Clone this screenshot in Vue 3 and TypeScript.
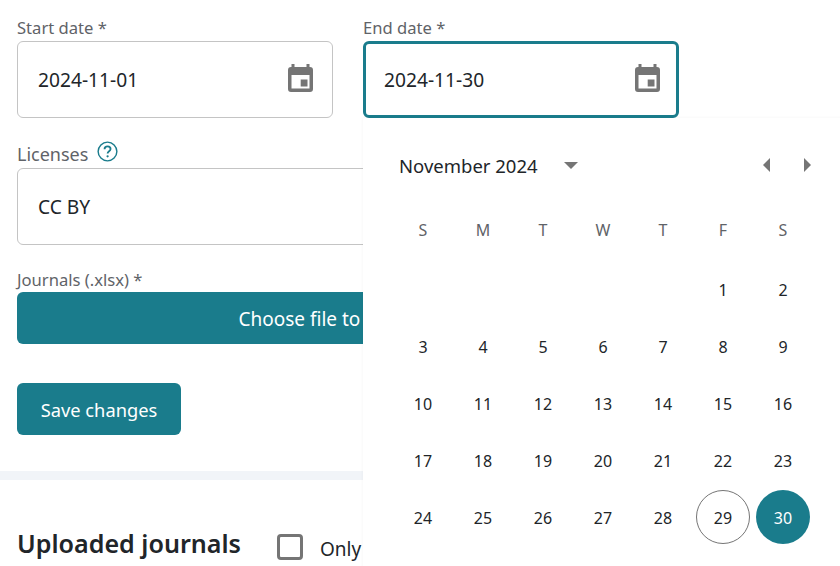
<script setup lang="ts">
const weekdays = ['S', 'M', 'T', 'W', 'T', 'F', 'S']
const days: (number | null)[] = [null, null, null, null, null]
for (let d = 1; d <= 30; d++) days.push(d)
</script>

<template>
  <main class="page">
    <section class="form">
      <div class="row two">
        <div class="field">
          <label class="lbl">Start date *</label>
          <div class="input">
            <span>2024-11-01</span>
            <svg class="cal" viewBox="0 0 25 28" width="25" height="28"><path fill="#757575" fill-rule="evenodd" d="M3.5 0h3v3h12V0h3v3h.5a3 3 0 0 1 3 3v19a3 3 0 0 1-3 3H3a3 3 0 0 1-3-3V6a3 3 0 0 1 3-3h.5zM3.5 11v13.5h18V11zM12.7 15.5h6.8v7h-6.8z" /></svg>
          </div>
        </div>
        <div class="field end">
          <label class="lbl">End date *</label>
          <div class="input focus">
            <span>2024-11-30</span>
            <svg class="cal" viewBox="0 0 25 28" width="25" height="28"><path fill="#757575" fill-rule="evenodd" d="M3.5 0h3v3h12V0h3v3h.5a3 3 0 0 1 3 3v19a3 3 0 0 1-3 3H3a3 3 0 0 1-3-3V6a3 3 0 0 1 3-3h.5zM3.5 11v13.5h18V11zM12.7 15.5h6.8v7h-6.8z" /></svg>
          </div>

          <div class="popup">
            <div class="cal-head">
              <span class="month">November 2024</span>
              <span class="tri down"></span>
              <span class="nav">
                <span class="tri left"></span>
                <span class="tri right"></span>
              </span>
            </div>
            <div class="grid names">
              <span v-for="(w, i) in weekdays" :key="i" class="name">{{ w }}</span>
            </div>
            <div class="grid dates">
              <span
                v-for="(d, i) in days"
                :key="i"
                class="day"
                :class="{ today: d === 29, sel: d === 30 }"
              >{{ d }}</span>
            </div>
          </div>
        </div>
      </div>

      <div class="field lic">
        <label class="lbl">Licenses
          <svg class="help" viewBox="0 0 22 22" width="21" height="21"><circle cx="11" cy="11" r="9.8" fill="none" stroke="#1a7c8c" stroke-width="1.5" /><path d="M7.9 8.6c0-1.8 1.4-3 3.2-3s3.1 1.1 3.1 2.8c0 2.4-3.1 2.4-3.1 4.8" fill="none" stroke="#1a7c8c" stroke-width="1.9" /><circle cx="11.1" cy="16" r="1.2" fill="#1a7c8c" /></svg>
        </label>
        <div class="input"><span>CC BY</span></div>
      </div>

      <div class="field jour">
        <label class="lbl">Journals (.xlsx) *</label>
        <button class="file">Choose file to upload</button>
      </div>

      <button class="save">Save changes</button>
    </section>

    <div class="divider"></div>

    <section class="uploaded">
      <h2>Uploaded journals</h2>
      <span class="check"></span>
      <span class="only">Only show mine</span>
    </section>
  </main>
</template>

<style>
html, body { margin: 0; background: #fff; overflow: hidden; }
</style>

<style scoped>
.page {
  width: 840px;
  height: 566px;
  overflow: hidden;
  font-family: "Noto Sans", "Open Sans", sans-serif;
  color: #212529;
}
.form { padding: 15px 161px 36px 17px; }
.row.two { display: grid; grid-template-columns: 316px 316px; column-gap: 30px; }
.field { position: relative; }
.lbl {
  display: flex;
  align-items: center;
  gap: 9px;
  box-sizing: border-box;
  height: 26px;
  padding-bottom: 2px;
  font-size: 16.6px;
  color: #5f6368;
}
.input {
  box-sizing: border-box;
  height: 77px;
  border: 1px solid #c4c4c4;
  border-radius: 6px;
  background: #fff;
  padding: 0 19px 0 20px;
  display: flex;
  align-items: center;
  justify-content: space-between;
  font-size: 19.2px;
  color: #212529;
}
.input.focus { border: 3px solid #1a7c8c; padding-left: 18px; padding-right: 16px; }
.cal { display: block; margin-top: -3px; }
.lic { margin-top: 24px; width: 662px; }
.lic .lbl { font-size: 18px; }
.help { margin-top: -6px; }
.jour { margin-top: 22px; width: 662px; }
.jour .lbl { height: 25px; padding-bottom: 0; }
.file {
  display: block;
  width: 100%;
  height: 52px;
  border: 0;
  border-radius: 6px;
  padding: 2px 30px 0 0;
  background: #1a7c8c;
  color: #fff;
  font: inherit;
  font-size: 19px;
}
.save {
  display: block;
  margin-top: 39px;
  width: 164px;
  height: 52px;
  border: 0;
  border-radius: 6px;
  padding: 0;
  background: #1a7c8c;
  color: #fff;
  font: inherit;
  font-size: 18.3px;
}
.divider { height: 9px; background: #f1f4f8; }
.uploaded {
  display: flex;
  align-items: flex-start;
  padding: 46px 0 0 17px;
}
.uploaded h2 { margin: 0; font-size: 25.1px; line-height: 34px; font-weight: 600; color: #212529; white-space: nowrap; }
.check {
  box-sizing: border-box;
  width: 26px;
  height: 26px;
  margin: 8px 0 0 36px;
  border: 3px solid #757575;
  border-radius: 4px;
  flex: none;
}
.only { margin: 10px 0 0 17px; font-size: 19px; line-height: 26px; white-space: nowrap; }

.popup {
  position: absolute;
  top: 103px;
  left: 0;
  z-index: 5;
  box-sizing: border-box;
  width: 480px;
  height: 460px;
  padding: 0 30px;
  background: #fff;
  box-shadow: 0 0 3px rgba(0, 0, 0, 0.05);
}
.cal-head { box-sizing: border-box; display: flex; align-items: center; height: 90px; padding: 4px 7px 0 6px; }
.month { font-size: 18.5px; color: #212529; }
.tri { display: block; width: 0; height: 0; border-style: solid; border-color: transparent; }
.tri.down { margin-left: 26px; border-width: 7px 7px 0; border-top-color: #757575; }
.nav { margin-left: auto; display: flex; gap: 34px; margin-right: -5px; }
.tri.left { border-width: 7px 7.5px 7px 0; border-right-color: #757575; }
.tri.right { border-width: 7px 0 7px 7.5px; border-left-color: #757575; }
.grid { display: grid; grid-template-columns: repeat(7, 60px); grid-auto-rows: 57px; }
.names { grid-auto-rows: 44px; }
.dates { margin-top: 9px; }
.name { display: flex; align-items: center; justify-content: center; font-size: 16px; color: #5f6368; }
.day { display: flex; align-items: center; justify-content: center; font-size: 16px; color: #212529; }
.day.today, .day.sel {
  width: 54px;
  height: 54px;
  margin-top: -2px;
  padding-top: 2px;
  border-radius: 50%;
  justify-self: center;
  align-self: center;
  box-sizing: border-box;
}
.day.today { border: 1px solid #757575; }
.day.sel { background: #1a7c8c; color: #fff; }
</style>
